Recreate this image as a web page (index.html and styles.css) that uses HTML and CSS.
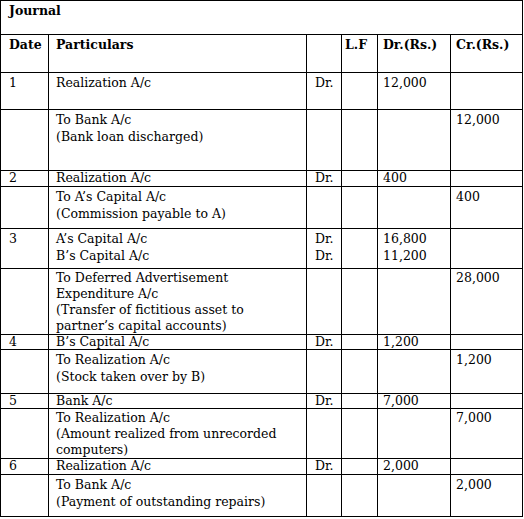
FILE: index.html
```html
<!DOCTYPE html>
<html lang="en">
<head>
  <meta charset="UTF-8">
  <title>Journal</title>
  <link rel="stylesheet" href="styles.css">
</head>
<body>

<table class="journal">
  <colgroup>
    <col class="c-date">
    <col class="c-part">
    <col class="c-dr">
    <col class="c-lf">
    <col class="c-amt">
    <col class="c-amt2">
  </colgroup>

  <tr class="r34">
    <th colspan="6" class="title">Journal</th>
  </tr>
  <tr class="r38">
    <th>Date</th>
    <th class="part">Particulars</th>
    <th></th>
    <th class="lf">L.F</th>
    <th class="amt">Dr.(Rs.)</th>
    <th class="amt">Cr.(Rs.)</th>
  </tr>

  <!-- 1 -->
  <tr class="r37">
    <td>1</td>
    <td class="part">Realization A/c</td>
    <td class="dr">Dr.</td>
    <td></td>
    <td class="amt">12,000</td>
    <td></td>
  </tr>
  <tr class="r61">
    <td></td>
    <td class="part">To Bank A/c<br>(Bank loan discharged)</td>
    <td></td>
    <td></td>
    <td></td>
    <td class="amt">12,000</td>
  </tr>

  <!-- 2 -->
  <tr class="r16 tight">
    <td>2</td>
    <td class="part">Realization A/c</td>
    <td class="dr">Dr.</td>
    <td></td>
    <td class="amt">400</td>
    <td></td>
  </tr>
  <tr class="r42">
    <td></td>
    <td class="part">To A’s Capital A/c<br>(Commission payable to A)</td>
    <td></td>
    <td></td>
    <td></td>
    <td class="amt">400</td>
  </tr>

  <!-- 3 -->
  <tr class="r40">
    <td>3</td>
    <td class="part">A’s Capital A/c<br>B’s Capital A/c</td>
    <td class="dr">Dr.<br>Dr.</td>
    <td></td>
    <td class="amt">16,800<br>11,200</td>
    <td></td>
  </tr>
  <tr class="r66 snug">
    <td></td>
    <td class="part">To Deferred Advertisement<br>Expenditure A/c<br>(Transfer of fictitious asset to<br>partner’s capital accounts)</td>
    <td></td>
    <td></td>
    <td></td>
    <td class="amt">28,000</td>
  </tr>

  <!-- 4 -->
  <tr class="r15 tight">
    <td>4</td>
    <td class="part">B’s Capital A/c</td>
    <td class="dr">Dr.</td>
    <td></td>
    <td class="amt">1,200</td>
    <td></td>
  </tr>
  <tr class="r44">
    <td></td>
    <td class="part">To Realization A/c<br>(Stock taken over by B)</td>
    <td></td>
    <td></td>
    <td></td>
    <td class="amt">1,200</td>
  </tr>

  <!-- 5 -->
  <tr class="r15 tight">
    <td>5</td>
    <td class="part">Bank A/c</td>
    <td class="dr">Dr.</td>
    <td></td>
    <td class="amt">7,000</td>
    <td></td>
  </tr>
  <tr class="r50 snug">
    <td></td>
    <td class="part">To Realization A/c<br>(Amount realized from unrecorded<br>computers)</td>
    <td></td>
    <td></td>
    <td></td>
    <td class="amt">7,000</td>
  </tr>

  <!-- 6 -->
  <tr class="r16 tight">
    <td>6</td>
    <td class="part">Realization A/c</td>
    <td class="dr">Dr.</td>
    <td></td>
    <td class="amt">2,000</td>
    <td></td>
  </tr>
  <tr class="r42">
    <td></td>
    <td class="part">To Bank A/c<br>(Payment of outstanding repairs)</td>
    <td></td>
    <td></td>
    <td></td>
    <td class="amt">2,000</td>
  </tr>
</table>

</body>
</html>
```

FILE: styles.css
```css
body {
  margin: 0;
  background: white;
  font-family: "DejaVu Serif", "Liberation Serif", serif;
  color: black;
}

.journal {
  border-collapse: collapse;
  table-layout: fixed;
  width: 523px;
  font-size: 12.5px;
  line-height: 17px;
}

.c-date { width: 48px; }
.c-part { width: 258px; }
.c-dr   { width: 35px; }
.c-lf   { width: 36px; }
.c-amt  { width: 73px; }
.c-amt2 { width: 72px; }

.journal th,
.journal td {
  border: 1px solid black;
  padding: 1px 4px 0 8px;
  vertical-align: top;
  text-align: left;
  white-space: nowrap;
  overflow: visible;
}

.journal th {
  font-weight: bold;
}

.journal .part { padding-left: 7px; }
.journal .dr   { padding-left: 8px; }
.journal .lf   { padding-left: 3px; }
.journal .amt  { padding-left: 5px; }

.journal .tight td {
  padding-top: 0;
  line-height: 14px;
}

.journal .snug td {
  padding-top: 1px;
  line-height: 16px;
}

.r15 { height: 15px; }
.r16 { height: 16px; }
.r34 { height: 34px; }
.r37 { height: 37px; }
.r38 { height: 38px; }
.r40 { height: 40px; }
.r42 { height: 42px; }
.r44 { height: 44px; }
.r50 { height: 50px; }
.r61 { height: 61px; }
.r66 { height: 66px; }
```
